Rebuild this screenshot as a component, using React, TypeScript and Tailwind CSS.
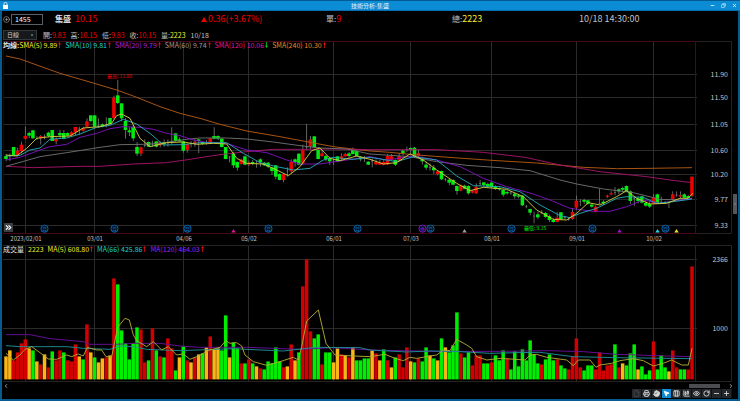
import React from "react";
import {
  Printer,
  Hand,
  MousePointer2,
  Columns3,
  ChartCandlestick,
  Eye,
  RotateCw,
  Minus,
  Plus,
  Copy,
  X,
  CirclePlus,
  ChevronLeft,
  ChevronRight,
  ChevronsRight,
  File,
} from "lucide-react";

/* Chart data is stored on a fine grid of three units per pixel. */
const FIRST = 18;
const PITCH = 11.562;
const at = (i: number) => FIRST + PITCH * i;

/* colour, body top, body bottom, wick top, wick bottom */
const CANDLES = `g 318 327 312 334|w 317 319 310 333|g 291 317 291 318|r 302 316 293 320|r 284 303 275 310|r 258 266 230 268|g 249 257 245 264|g 241 265 240 266|w 265 266 258 270|r 258 265 255 284|w 259 261 253 268|g 248 258 245 262|g 240 273 240 273|r 267 274 262 283|g 249 256 240 265|g 249 266 240 268|g 249 257 247 260|r 247 257 244 260|r 231 247 231 256|w 236 238 230 254|r 234 242 230 245|r 214 230 205 232|g 196 213 195 216|g 196 230 196 230|w 226 228 205 234|g 223 229 220 232|w 224 226 202 232|g 204 222 203 224|r 143 204 137 208|g 136 159 90 162|g 160 205 160 214|g 213 240 204 266|g 241 247 232 258|g 231 265 225 273|g 291 311 276 318|r 292 311 290 318|w 286 288 268 292|g 276 290 274 291|w 283 285 272 290|g 274 290 274 292|r 276 286 274 292|g 276 283 268 290|w 278 280 268 290|w 272 274 232 284|g 250 273 250 275|g 268 274 262 276|g 274 302 274 308|r 282 300 281 308|w 280 282 273 292|r 275 282 268 290|g 268 273 268 309|g 276 282 274 284|w 278 280 270 284|r 265 281 264 282|g 258 266 232 268|g 258 266 256 270|g 266 291 264 292|g 291 327 291 328|w 320 322 318 337|g 310 346 306 354|g 336 353 334 362|r 329 342 326 344|g 319 344 316 346|r 338 344 332 348|g 336 342 330 346|w 340 342 332 353|g 328 336 325 350|g 338 346 336 348|g 338 350 336 354|g 352 363 350 374|g 346 380 345 388|g 372 390 370 391|r 372 390 371 397|w 362 364 352 380|r 336 364 328 370|g 328 336 325 350|g 311 344 310 346|r 300 341 284 345|w 290 292 222 300|r 268 290 258 300|g 259 292 259 292|g 300 327 292 328|r 310 318 300 320|g 318 327 315 334|g 325 334 320 345|w 334 336 325 345|g 319 335 318 336|r 319 327 310 330|r 312 319 308 320|g 310 318 306 322|g 300 312 293 314|g 303 318 300 320|g 320 328 318 334|w 324 326 318 336|g 335 344 334 345|w 332 334 326 352|r 336 343 328 345|r 338 344 330 345|r 336 344 328 346|r 318 343 312 345|r 319 330 312 332|g 330 344 328 348|r 318 332 310 334|g 302 309 298 316|w 298 300 290 306|g 294 300 292 312|g 293 320 291 324|r 309 317 300 325|g 327 334 320 344|g 344 353 335 360|w 352 354 340 362|g 353 361 345 372|r 364 372 360 376|g 363 388 362 389|w 388 390 384 394|g 389 398 386 406|g 390 404 388 406|g 408 423 406 434|r 406 422 404 424|g 407 416 404 418|g 408 430 406 434|r 422 428 420 430|r 410 430 400 432|w 400 402 390 408|g 397 405 396 412|g 402 410 398 414|g 398 412 396 414|g 409 417 406 420|g 414 418 412 422|g 420 434 418 440|g 426 430 422 434|w 428 430 422 434|g 431 439 428 446|g 436 440 432 445|g 437 466 436 468|w 468 470 465 475|g 477 488 476 496|w 497 499 485 520|g 493 502 485 507|w 487 489 480 492|g 489 501 486 503|g 499 510 494 516|g 510 516 505 518|r 503 516 486 517|g 487 508 486 510|w 502 504 498 510|w 507 509 502 512|r 486 507 475 509|r 452 473 437 480|w 453 455 448 468|g 450 455 446 462|g 451 461 450 464|g 464 470 460 473|r 470 486 466 487|w 460 462 416 462|g 455 460 450 465|r 437 440 434 444|r 430 433 424 436|w 427 429 411 436|g 418 424 415 432|g 414 419 410 426|g 408 424 406 426|g 424 453 422 462|w 445 447 440 468|g 445 453 440 460|g 439 458 437 460|g 459 467 450 470|g 462 470 455 474|r 443 461 432 462|g 433 460 431 461|w 455 457 440 460|w 457 459 453 462|g 457 459 455 474|r 433 448 424 450|w 434 436 424 440|r 435 440 424 444|g 433 443 430 446|g 438 446 435 448|r 380 438 380 440`
  .split("|")
  .map((row) => {
    const [c, ...n] = row.split(" ");
    return { c, n: n.map(Number) };
  });

/* colour followed by bar height in pixels */
const VOLUMES =
  "y23 y29 r19 r27 r36 r40 y31 g29 y18 r15 y25 r12 g28 r19 r29 g27 r19 r18 r35 y23 g20 r55 y27 g22 y17 y21 r22 y24 r101 g95 g49 g36 g20 g36 g52 r50 r17 g19 r51 g29 r23 g22 r41 r31 g9 y22 g33 r19 y17 r22 y25 g26 y32 r43 y30 y31 g29 g64 y22 g37 g31 r16 g16 r20 g16 y13 r11 g10 g18 g16 g32 g18 r12 y13 r35 y19 g27 r93 r120 r48 g41 g45 r15 g27 g27 y17 y31 r25 y24 r22 y32 g19 g19 g21 g21 y29 r26 y19 g30 r19 y12 g22 r25 r12 r32 y18 g17 r21 g18 g32 y24 g21 y19 g41 y32 g27 g34 g67 r26 g22 g27 r14 r24 r24 g16 g16 r17 g24 g19 g29 r21 g10 g28 g13 g30 g19 g39 g25 g16 r15 g20 g25 g19 r20 g14 g11 r10 r23 r41 r12 g9 g14 g14 r10 r27 r9 r14 r15 g35 r12 y16 g14 g26 g35 y10 g13 g5 g9 r38 g10 g24 g12 y8 r29 r12 g10 g10 r10 r113"
    .split(" ")
    .map((v) => ({ c: v[0], h: Number(v.slice(1)) }));

const CANDLE_FILL: Record<string, string> = { g: "#00ec10", r: "#ec0000", w: "#7c7c7c" };
const VOLUME_FILL: Record<string, string> = { g: "#00ee00", r: "#d20000", y: "#f9b616" };

const PRICE_LINES = [
  { color: "#b45a14", pts: "18,18 60,27 180,70 283,100 353,121 400,138 480,170 540,190 600,205 660,223 740,243 840,260 920,275 1000,290 1110,303 1170,307 1240,314 1360,323 1475,331 1610,339 1750,352 1850,356 1950,355 2076,353" },
  { color: "#a8136c", pts: "18,349 100,353 240,349 300,349 400,342 500,338 570,328 600,323 660,314 740,305 820,298 900,298 1000,297 1110,299 1310,299 1450,307 1575,322 1680,345 1800,365 1940,380 2010,390 2076,398" },
  { color: "#707070", pts: "18,349 60,337 120,320 200,308 300,292 360,284 430,283 480,280 560,268 600,264 680,264 740,267 820,276 900,287 960,294 1040,297 1110,312 1230,320 1310,335 1400,346 1500,353 1590,362 1680,390 1730,402 1810,417 1900,428 1980,448 2040,450 2076,445" },
  { color: "#7d12c2", pts: "18,330 60,322 120,300 150,290 200,283 240,262 290,250 330,236 370,230 420,232 460,238 500,250 540,257 580,270 620,277 680,280 740,300 800,308 860,330 900,342 960,342 1040,330 1110,320 1160,330 1240,318 1310,330 1380,350 1450,385 1520,410 1600,432 1650,450 1710,475 1780,484 1830,484 1880,470 1930,450 1980,460 2076,445" },
  { color: "#25a9b8", pts: "18,318 60,316 90,300 120,294 150,268 200,264 240,252 290,232 330,226 370,208 410,222 450,250 490,285 550,284 600,278 680,278 730,310 780,338 830,350 880,360 930,355 970,330 1000,322 1060,328 1110,322 1190,335 1240,320 1310,330 1370,378 1420,407 1500,410 1560,425 1620,465 1680,497 1710,503 1740,490 1790,475 1850,445 1880,440 1930,442 1970,460 2020,455 2076,447" },
  { color: "#d2cb3e", pts: "18,315 50,318 80,295 110,265 150,260 210,258 250,234 300,230 335,220 350,197 365,192 390,205 405,235 420,265 450,290 500,278 550,276 590,283 640,280 680,282 710,325 740,340 790,342 830,360 865,377 900,350 935,302 960,294 990,325 1020,332 1070,318 1110,328 1150,342 1190,338 1230,312 1270,330 1310,360 1370,400 1410,422 1450,412 1520,418 1570,440 1610,480 1660,508 1700,510 1730,490 1765,458 1800,465 1850,440 1880,422 1910,445 1950,462 2000,460 2040,445 2064,445 2078,430" },
];

const VOLUME_LINES = [
  { color: "#68119c", pts: "18,284 90,284 150,296 250,305 270,313 350,313 400,310 480,310 540,318 600,322 740,322 900,328 1000,323 1110,330 1300,334 1500,334 1640,332 1750,335 1850,343 2000,348 2076,350" },
  { color: "#1e8f98", pts: "18,317 60,320 200,320 250,325 330,328 360,318 400,320 440,328 540,332 700,326 780,330 850,333 920,325 950,322 1080,323 1110,330 1220,336 1290,333 1380,335 1470,340 1550,338 1620,337 1680,345 1720,350 1850,353 2076,356" },
  { color: "#b3ab32", pts: "18,340 40,360 60,345 75,328 95,320 120,338 145,357 170,358 200,345 215,350 235,342 250,348 262,322 290,330 305,330 318,350 335,350 353,262 375,235 388,240 400,285 410,302 440,320 460,305 485,330 505,320 530,345 550,342 570,358 590,350 630,330 660,322 678,302 690,310 710,308 725,318 735,345 760,365 800,376 840,365 880,352 895,360 905,320 920,243 955,210 978,310 1005,345 1040,347 1110,350 1155,343 1185,355 1210,362 1230,352 1250,355 1310,345 1330,330 1350,332 1370,298 1400,315 1415,325 1430,350 1460,360 1500,355 1575,360 1590,345 1610,343 1640,352 1700,360 1720,377 1735,360 1770,360 1788,382 1800,375 1835,370 1860,362 1900,356 1930,362 1960,378 1990,370 2015,360 2045,375 2065,375 2076,325" },
];

const MONTHS = [
  { x: 25, label: "2023/02/01" },
  { x: 94, label: "03/01" },
  { x: 183, label: "04/06" },
  { x: 248, label: "05/02" },
  { x: 333, label: "06/01" },
  { x: 410, label: "07/03" },
  { x: 491, label: "08/01" },
  { x: 576, label: "09/01" },
  { x: 653, label: "10/02" },
];

const PRICES = [
  { y: 74, label: "11.90" },
  { y: 97, label: "11.50" },
  { y: 124, label: "11.05" },
  { y: 150, label: "10.60" },
  { y: 174, label: "10.20" },
  { y: 199, label: "9.77" },
  { y: 225, label: "9.33" },
];

const BADGES = [44, 114, 187, 268, 357, 430, 511, 592, 665];
const FLAGS = [
  { x: 233, color: "#e0139a" },
  { x: 464, color: "#a0a0a0" },
  { x: 619, color: "#a012d0" },
  { x: 657, color: "#25d3e0" },
  { x: 676, color: "#f0e030" },
];

function Badge({ x, color, text }: { x: number; color: string; text: string }) {
  return (
    <g>
      <circle cx={x + 0.5} cy={228.7} r={3.6} fill="#00101f" stroke={color} strokeWidth={0.9} />
      <text x={x + 0.5} y={231} textAnchor="middle" fontSize={5} fill={color}>
        {text}
      </text>
    </g>
  );
}

function PriceChart() {
  return (
    <svg viewBox="2 41 736 204" className="block w-full" role="img" aria-label="K線圖">
      <g fill="none" strokeWidth={1} stroke="#2b2b2b">
        {PRICES.map((p) => (
          <path key={p.y} d={`M3 ${p.y + 0.5}H697`} />
        ))}
        {MONTHS.map((m) => (
          <path key={m.x} d={`M${m.x + 0.5} 41V233`} />
        ))}
        <path d="M696 41.5H731.5V233.5H696" stroke="#222222" />
        <path d="M3 41.5H695.5V233.5H3" stroke="#480818" />
        <path d="M3.5 41V233" stroke="#22060c" />
      </g>
      <g transform="translate(0 50) scale(0.33333)">
        {CANDLES.map(({ c, n }, i) => (
          <g key={i}>
            <rect x={at(i) - 1} y={n[2]} width={2.4} height={n[3] - n[2]} fill="#7c7c7c" />
            <rect
              x={at(i) - (c === "w" ? 3 : 5.4)}
              y={n[0]}
              width={c === "w" ? 6 : 10.6}
              height={n[1] - n[0]}
              fill={CANDLE_FILL[c]}
            />
          </g>
        ))}
        {PRICE_LINES.map((l) => (
          <polyline key={l.color} points={l.pts} fill="none" stroke={l.color} strokeWidth={2.8} strokeLinejoin="round" />
        ))}
      </g>
      <text x={107} y={78} fontSize={5} fill="#f00000">最高: 11.80</text>
      <text x={524} y={230} fontSize={5} fill="#00f000">最低: 9.15</text>
      {BADGES.map((x) => (
        <Badge key={x} x={x} color="#0b6cba" text="月" />
      ))}
      <Badge x={422} color="#8a14d0" text="季" />
      {FLAGS.map((f) => (
        <path key={f.x} d={`M${f.x + 0.5} 229l2.2 3.4h-4.4z`} fill={f.color} />
      ))}
      <g fontSize={6} fill="#c0c0c0">
        {MONTHS.map((m) => (
          <text key={m.x} x={m.x + 1} y={241} textAnchor="middle">
            {m.label}
          </text>
        ))}
      </g>
      <g fontSize={7} fill="#c4c4c4" textAnchor="end">
        {PRICES.map((p) => (
          <text key={p.y} x={728} y={p.y + 3}>
            {p.label}
          </text>
        ))}
      </g>
    </svg>
  );
}

function VolumeChart() {
  return (
    <svg viewBox="2 245 736 137" className="block w-full" role="img" aria-label="成交量圖">
      <g fill="none" strokeWidth={1} stroke="#2b2b2b">
        <path d="M3 259.5H697M3 328.5H697" />
        {MONTHS.map((m) => (
          <path key={m.x} d={`M${m.x + 0.5} 245V381`} />
        ))}
        <path d="M695.5 245V381M3 245.5H731.5V381.5H3" stroke="#242424" />
      </g>
      {VOLUMES.map((v, i) => (
        <rect
          key={i}
          x={at(i) / 3 - 1.75}
          y={379.4 - v.h}
          width={3.5}
          height={v.h}
          fill={VOLUME_FILL[v.c]}
        />
      ))}
      <g transform="translate(0 240) scale(0.33333)">
        {VOLUME_LINES.map((l) => (
          <polyline key={l.color} points={l.pts} fill="none" stroke={l.color} strokeWidth={2.8} strokeLinejoin="round" />
        ))}
      </g>
      <g fontSize={7} fill="#c4c4c4" textAnchor="end">
        <text x={728} y={262}>2366</text>
        <text x={728} y={331}>1000</text>
      </g>
    </svg>
  );
}

function Arrow({ down = false }: { down?: boolean }) {
  return (
    <svg
      viewBox="0 0 3 6"
      className={down ? "h-[6px] w-[3px] rotate-180 text-[#00d020]" : "h-[6px] w-[3px] text-[#e01010]"}
    >
      <path d="M1.5 0L3 2.2H1.9V6H1.1V2.2H0z" fill="currentColor" />
    </svg>
  );
}

function Legend({ text, color, down }: { text: string; color: string; down?: boolean }) {
  return (
    <span className={`flex items-center gap-px ${color}`}>
      {text}
      <Arrow down={down} />
    </span>
  );
}

function Quote({ name, value, color = "text-[#f00000]" }: { name: string; value: string; color?: string }) {
  return (
    <span className="text-[#c0c0c0]">
      {name}:<span className={color}>{value}</span>
    </span>
  );
}

const TOOLS = [
  { Icon: File, label: "新增", dim: true },
  { Icon: Printer, label: "列印" },
  { Icon: Hand, label: "拖曳", solid: true },
  { Icon: MousePointer2, label: "選取", active: true, solid: true },
  { Icon: Columns3, label: "欄位" },
  { Icon: ChartCandlestick, label: "指標" },
  { Icon: Eye, label: "檢視" },
  { Icon: RotateCw, label: "重新整理" },
  { Icon: Minus, label: "縮小" },
  { Icon: Plus, label: "放大" },
];

export default function App() {
  return (
    <div className="relative border-x-2 border-b-2 border-[#065a8c] bg-black font-['Noto_Sans_CJK_TC','Noto_Sans',sans-serif] text-[7px] leading-[10px] text-[#c0c0c0]">
      <header className="-mx-[2px] flex h-[11px] items-center border-t border-b border-t-[#065a94] border-b-[#086fae] bg-[#0c8cd4] px-[3px] text-white">
        <div className="flex-1">
          <svg viewBox="0 0 5 7" className="block h-[7px] w-[5px]" aria-hidden="true">
            <rect y={3} width={5} height={4} fill="#fff" />
            <path d="M1 3V1.8a1.5 1.3 0 0 1 3 0V3" fill="none" stroke="#fff" strokeWidth={0.8} />
          </svg>
        </div>
        <h1 className="text-[6px] leading-[8px] text-[#e4f4ff]">技術分析-集盛</h1>
        <div className="flex flex-1 justify-end gap-[6px] text-[#d8f0ff]">
          <button aria-label="最小化"><Minus className="size-[5px]" strokeWidth={4} /></button>
          <button aria-label="還原"><Copy className="size-[5px] -scale-x-100" strokeWidth={3} /></button>
          <button aria-label="關閉"><X className="size-[5px]" strokeWidth={4} /></button>
        </div>
      </header>

      <div className="grid h-4 grid-cols-[199fr_125fr_126fr_127fr_159fr] items-center text-[9px] leading-[14px]">
        <div className="flex items-center">
          <button aria-label="加入自選" className="ml-px"><CirclePlus className="size-[7px] text-[#b0b0b0]" strokeWidth={2} /></button>
          <input
            aria-label="股票代號"
            defaultValue="1455"
            className="ml-px h-[11px] w-8 border border-[#5a5f64] bg-black px-[3px] text-[7px] leading-[9px] text-white"
          />
          <b className="ml-3 text-[8px] text-[#e0e0e0]">集盛</b>
          <span className="ml-1 text-[#f00000]">10.15</span>
        </div>
        <div className="flex items-center gap-px text-[#f00000]">
          <svg viewBox="0 0 6 5" className="h-[5px] w-[6px]"><path d="M3 0L6 5H0z" fill="currentColor" /></svg>
          0.36(+3.67%)
        </div>
        <div>
          <span className="text-[8px]">單:</span><span className="text-[#f00000]">9</span>
        </div>
        <div>
          <span className="text-[8px]">總:</span><span className="text-[#f0ec2c]">2223</span>
        </div>
        <div>10/18 14:30:00</div>
      </div>

      <div className="flex h-[14px] items-center gap-[5px] pt-[2px] pl-px">
        <div className="relative mr-px">
          <select
            aria-label="週期"
            className="block h-[10px] w-[34px] appearance-none border border-[#33383c] bg-[#15191c] pl-[3px] text-[6px] leading-[8px] text-[#d0d0d0]"
          >
            <option>日線</option>
          </select>
          <span className="pointer-events-none absolute top-1 right-1 size-[2px] bg-[#5c6064]" />
        </div>
        <Quote name="開" value="9.83" />
        <Quote name="高" value="10.15" />
        <Quote name="低" value="9.83" />
        <Quote name="收" value="10.15" />
        <Quote name="量" value="2223" color="text-[#f0ec2c]" />
        <span>10/18</span>
      </div>

      <section className="relative">
        <PriceChart />
        <div className="absolute -top-px left-px flex items-center gap-1 whitespace-nowrap">
          <span className="flex">
            <b className="text-[#e4e4e4]">均線:</b>
            <Legend text="SMA(5) 9.89" color="text-[#f0ec2c]" />
          </span>
          <Legend text="SMA(10) 9.81" color="text-[#1cd0dc]" />
          <Legend text="SMA(20) 9.79" color="text-[#a020f0]" />
          <Legend text="SMA(60) 9.74" color="text-[#9c9c9c]" />
          <Legend text="SMA(120) 10.06" color="text-[#e8149c]" down />
          <Legend text="SMA(240) 10.30" color="text-[#f58522]" />
        </div>
        <button
          aria-label="展開"
          className="absolute bottom-[13px] left-[2px] flex size-[9px] items-center justify-center bg-[#3c3f42] text-white"
        >
          <ChevronsRight className="size-[9px]" strokeWidth={3} />
        </button>
        <button
          aria-label="收合側欄"
          className="absolute right-px bottom-[31px] flex h-5 w-1 items-center justify-center bg-[#55585a] text-[#b0b0b0]"
        >
          <ChevronLeft className="size-1" strokeWidth={3} />
        </button>
      </section>

      <section className="relative">
        <VolumeChart />
        <div className="absolute -top-px left-px flex items-center gap-1 whitespace-nowrap">
          <span className="text-[#e4e4e4]">成交量</span>
          <span className="text-[#f0ec2c]">2223</span>
          <Legend text="MA(5) 608.80" color="text-[#f0ec2c]" />
          <Legend text="MA(66) 425.86" color="text-[#1cd0dc]" />
          <Legend text="MA(120) 464.03" color="text-[#a020f0]" />
        </div>
      </section>

      <div className="flex h-[7px] items-center pr-1 pl-px text-[#c8c8c8]">
        <button aria-label="向左捲動"><ChevronLeft className="size-[6px]" strokeWidth={3} /></button>
        <div className="flex h-1 flex-1 justify-end pr-2">
          <div className="w-[31px] bg-[#4a4d50]" />
        </div>
        <button aria-label="向右捲動"><ChevronRight className="size-[6px]" strokeWidth={3} /></button>
      </div>

      <footer className="flex h-[10px] justify-end pr-[6px]">
        {TOOLS.map(({ Icon, label, active, dim, solid }) => (
          <button
            key={label}
            aria-label={label}
            className={`flex h-[9px] w-[10px] items-center justify-center border-r border-[#101214] ${
              active ? "bg-[#0c8cd4] text-white" : dim ? "bg-[#24272a] text-[#45484b]" : "bg-[#24272a] text-[#d8d8d8]"
            }`}
          >
            <Icon className="size-[7px]" strokeWidth={3} fill={solid ? "currentColor" : "none"} />
          </button>
        ))}
      </footer>
    </div>
  );
}
